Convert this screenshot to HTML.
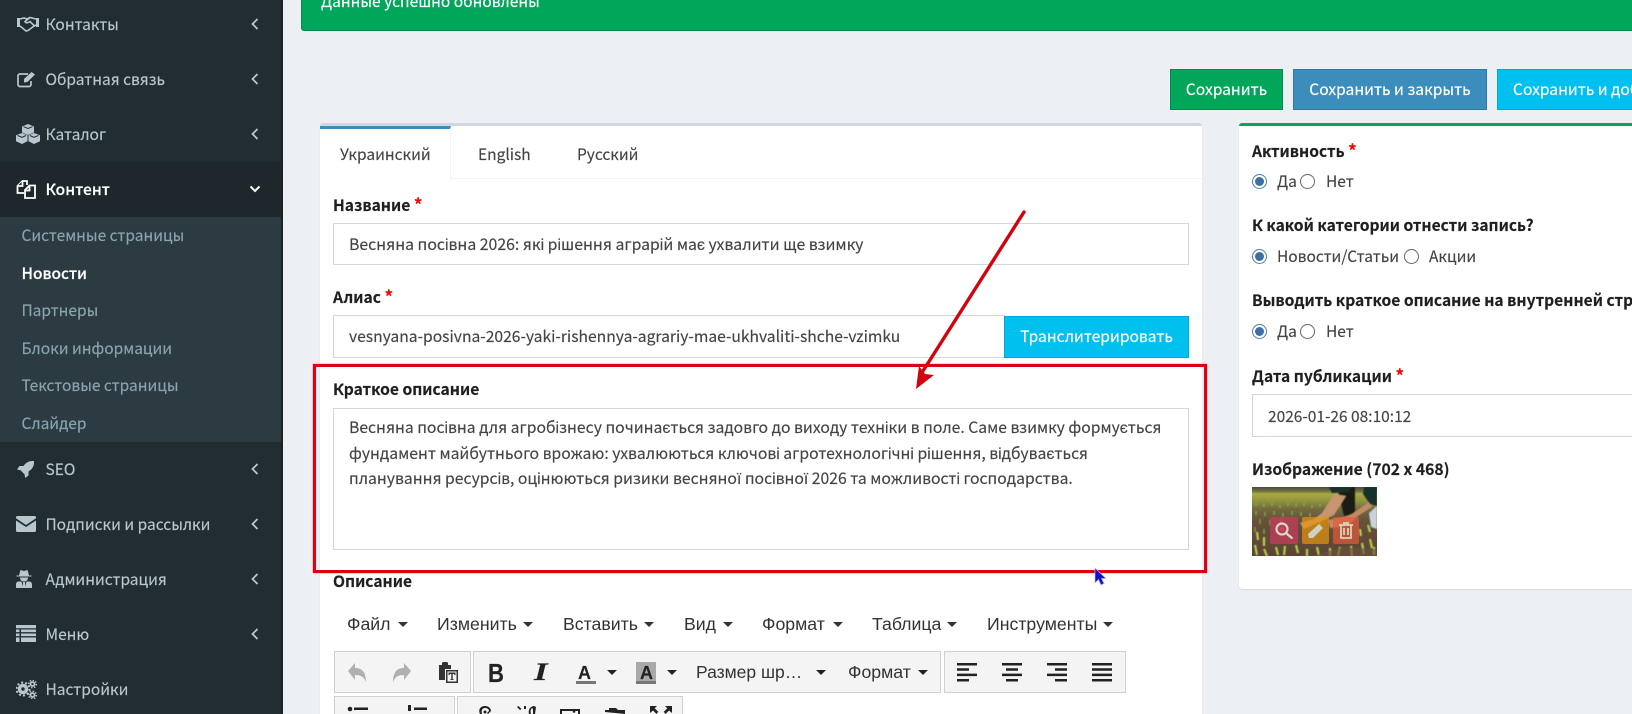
<!DOCTYPE html>
<html lang="ru"><head><meta charset="utf-8"><title>Новости</title>
<style>
html,body{margin:0;padding:0;width:1632px;height:714px;overflow:hidden;background:#ecf0f5}
body{position:relative;font-family:"Noto Sans CJK JP","Liberation Sans",sans-serif;font-size:15.5px;color:#333}
div,span,svg{position:absolute;display:block;box-sizing:border-box}
.t{white-space:nowrap;line-height:20px;height:20px;-webkit-text-stroke:.15px}
.nav{color:#b8c7ce;left:45.5px;font-size:15.5px}
.sub{color:#8aa4af;left:21.5px;font-size:15.5px}
.b{font-weight:700;color:#1f1f1f;font-size:15.6px}
.b i{font-style:normal;color:#f00;font-weight:700;font-size:17px}
.v{color:#444}
.w{font-size:15.72px}
.inp{background:#fff;border:1px solid #d2d6de}
.btn{color:#fff;text-align:center;line-height:39px;font-size:15.6px;white-space:nowrap;-webkit-text-stroke:.15px}
.m{font-family:"Liberation Sans",sans-serif;font-size:17.7px;color:#333;white-space:nowrap;line-height:20px;height:20px}
.c{width:0;height:0;border-left:5px solid transparent;border-right:5px solid transparent;border-top:5px solid #333}
.g{background:#f4f4f4;border:1px solid #d0d0d0}
.r{width:15px;height:15px;border-radius:50%;border:1px solid #666;background:#fff}
.rc{width:15px;height:15px;border-radius:50%;border:1.5px solid #4a7fb0;background:#fff}
.rc:after{content:"";position:absolute;left:1.5px;top:1.5px;width:9px;height:9px;border-radius:50%;background:#3c6fa3}
</style></head><body>

<!-- sidebar -->
<div style="left:0;top:0;width:283px;height:714px;background:#222d32;border-right:2px solid #1a2226"></div>
<div style="left:0;top:162px;width:281px;height:55px;background:#1e282c"></div>
<div style="left:0;top:217px;width:281px;height:225px;background:#2c3b41"></div>

<svg style="left:16px;top:16px" width="24" height="16" viewBox="0 0 24 16" fill="none" stroke="#b8c7ce" stroke-width="1.6"><path d="M1 2h3v9H1zM20 2h3v9h-3z" fill="#b8c7ce" stroke="none"/><path d="M4 3l4-1 3 1 3-1.500 6 1.500M4 10l6 5 2-.5 6-4.500 2-1M14 1.500L9 5.500c1 2 3 1.500 5 0l5 5"/></svg>
<span class="t nav" style="top:14px">Контакты</span>
<svg style="left:17px;top:71px" width="19" height="17" viewBox="0 0 19 17" fill="none" stroke="#b8c7ce" stroke-width="1.700"><path d="M14 10v3.500a2 2 0 0 1-2 2H3a2 2 0 0 1-2-2V5a2 2 0 0 1 2-2h8"/><path d="M7 8L14.500 1 18 3.500 10.500 11 7 11.500z" fill="#b8c7ce" stroke="none"/></svg>
<span class="t nav" style="top:69px">Обратная связь</span>
<svg style="left:16px;top:124px" width="24" height="20" viewBox="0 0 24 20" fill="#b8c7ce"><path d="M12 0l6 2.500v6L12 11 6 8.500v-6zM6 9l5.500 2.300v6L6 20 0 17.300v-6zM18 9l6 2.300v6L18 20l-5.500-2.700v-6z"/><path d="M7.500 2.700L12 4.500l4.500-1.800M1.500 11.500L6 13.300l4-1.800M13.800 11.500l4.200 1.800 4.500-1.800" stroke="#222d32" stroke-width="1" fill="none"/></svg>
<span class="t nav" style="top:124px">Каталог</span>
<svg style="left:16px;top:179px" width="20" height="20" viewBox="0 0 20 20" fill="none" stroke="#fff" stroke-width="1.800"><path d="M8 14H1.500V7L6.500 2H11v4"/><path d="M6.500 2v5h-5M19 19H9V11l4.500-4.500H19z" fill="#1e282c"/><path d="M13.500 6.500v5H9"/></svg>
<span class="t nav" style="top:179px;color:#fff;font-weight:500">Контент</span>

<span class="t sub" style="top:225px">Системные страницы</span>
<span class="t sub" style="top:263px;color:#fff;font-weight:500">Новости</span>
<span class="t sub" style="top:300px">Партнеры</span>
<span class="t sub" style="top:338px">Блоки информации</span>
<span class="t sub" style="top:375px">Текстовые страницы</span>
<span class="t sub" style="top:413px">Слайдер</span>

<svg style="left:17px;top:461px" width="17" height="17" viewBox="0 0 17 17" fill="#b8c7ce"><path d="M17 0c-5-.3-8 1.500-10.500 5H2.500L0 8.500l3.500.7 4 4 .7 3.800 3.300-2.500v-4C15.500 8 17.300 5 17 0z"/></svg>
<span class="t nav" style="top:459px">SEO</span>
<svg style="left:16px;top:516px" width="20" height="16" viewBox="0 0 20 16" fill="#b8c7ce"><path d="M1.500 0h17A1.500 1.500 0 0 1 20 1.500v.8L10 9 0 2.300v-.8A1.500 1.500 0 0 1 1.500 0zM0 4.500L10 11l10-6.500v10A1.500 1.500 0 0 1 18.500 16h-17A1.500 1.500 0 0 1 0 14.500z"/></svg>
<span class="t nav" style="top:514px">Подписки и рассылки</span>
<svg style="left:16px;top:569px" width="16" height="19" viewBox="0 0 16 19" fill="#b8c7ce"><path d="M4.500 1L8 2l3.500-1L13 6.500h2.500v1H.5v-1H3zM4 8.500h8c0 2.500-1.500 4-4 4s-4-1.500-4-4zM2.500 12.500h3L7 19H0v-3.500c0-1.500 1-3 2.500-3zM10.500 12.500h3c1.500 0 2.500 1.500 2.500 3V19H9z"/><path d="M7 13h2l.5 6h-3z"/></svg>
<span class="t nav" style="top:569px">Администрация</span>
<svg style="left:16px;top:625px" width="20" height="17" viewBox="0 0 20 17" fill="#b8c7ce"><path d="M0 0h20v3.200H0zM0 4.500h3.500v2.600H0zM5 4.500h15v2.600H5zM0 8.500h3.500v2.600H0zM5 8.500h15v2.600H5zM0 12.500h3.500V17H0zM5 12.500h15V17H5z"/></svg>
<span class="t nav" style="top:624px">Меню</span>
<svg style="left:16px;top:680px" width="21" height="19" viewBox="0 0 21 19"><g fill="none" stroke="#b8c7ce"><circle cx="7" cy="9" r="3.500" stroke-width="3.500"/><circle cx="7" cy="9" r="6.500" stroke-width="2" stroke-dasharray="2 2.080"/><circle cx="16.500" cy="4" r="2" stroke-width="1.800"/><circle cx="16.500" cy="4" r="3.800" stroke-width="1.400" stroke-dasharray="1.500 1.480"/><circle cx="16.500" cy="15" r="2" stroke-width="1.800"/><circle cx="16.500" cy="15" r="3.800" stroke-width="1.400" stroke-dasharray="1.500 1.480"/></g></svg>
<span class="t nav" style="top:679px">Настройки</span>

<svg style="left:250px;top:0" width="12" height="714" viewBox="0 0 12 714" fill="none" stroke="#b8c7ce" stroke-width="1.800"><path d="M7.500 19l-5 5 5 5M7.500 74l-5 5 5 5M7.500 129l-5 5 5 5M7.500 464l-5 5 5 5M7.500 519l-5 5 5 5M7.500 574l-5 5 5 5M7.500 629l-5 5 5 5"/><path d="M.5 186.500l4.500 4.500 4.500-4.500" stroke="#fff" stroke-width="2"/></svg>

<!-- alert -->
<div style="left:301px;top:-6px;width:1340px;height:37px;background:#00a65a;border:1px solid #008d4c;border-radius:3px"></div>
<span class="t" style="left:321px;top:-9px;color:#fff">Данные успешно обновлены</span>

<!-- action buttons -->
<div class="btn" style="left:1170px;top:69px;width:113px;height:41px;background:#00a65a;border:1px solid #008d4c">Сохранить</div>
<div class="btn" style="left:1293px;top:69px;width:194px;height:41px;background:#3c8dbc;border:1px solid #2e79a8">Сохранить и закрыть</div>
<div class="btn" style="left:1497px;top:69px;width:190px;height:41px;background:#00c0ef;border:1px solid #00acd6;text-align:left;padding-left:15px">Сохранить и добавить</div>

<!-- left card -->
<div style="left:320px;top:123px;width:882px;height:600px;background:#fff;border-top:3px solid #d2d6de;border-radius:3px;box-shadow:0 1px 1px rgba(0,0,0,.1)"></div>
<div style="left:320px;top:178px;width:882px;height:1px;background:#f4f4f4"></div>
<div style="left:320px;top:126px;width:131px;height:54px;background:#fff;border-top:3px solid #3c8dbc;border-right:1px solid #f4f4f4"></div>
<span class="t" style="left:340px;top:144px;color:#444">Украинский</span>
<span class="t" style="left:478px;top:144px;color:#444">English</span>
<span class="t" style="left:577px;top:144px;color:#444">Русский</span>

<span class="t b" style="left:333px;top:194px">Название <i>*</i></span>
<div class="inp" style="left:333px;top:223px;width:856px;height:42px"></div>
<span class="t v" style="left:349px;top:234px;font-size:15.8px">Весняна посівна 2026: які рішення аграрій має ухвалити ще взимку</span>

<span class="t b" style="left:333px;top:286px">Алиас <i>*</i></span>
<div class="inp" style="left:333px;top:315px;width:672px;height:43px"></div>
<span class="t v" style="left:349px;top:326px;font-size:15.65px">vesnyana-posivna-2026-yaki-rishennya-agrariy-mae-ukhvaliti-shche-vzimku</span>
<div class="btn" style="left:1004px;top:316px;width:185px;height:42px;background:#00c0ef;border:1px solid #00acd6">Транслитерировать</div>

<span class="t b" style="left:333px;top:379px">Краткое описание</span>
<div class="inp" style="left:333px;top:408px;width:856px;height:142px"></div>
<span class="t v w" style="left:349px;top:417px">Весняна посівна для агробізнесу починається задовго до виходу техніки в поле. Саме взимку формується</span>
<span class="t v w" style="left:349px;top:443px">фундамент майбутнього врожаю: ухвалюються ключові агротехнологічні рішення, відбувається</span>
<span class="t v w" style="left:349px;top:468px">планування ресурсів, оцінюються ризики весняної посівної 2026 та можливості господарства.</span>

<span class="t b" style="left:333px;top:571px">Описание</span>

<!-- tinymce menu -->
<span class="m" style="left:347px;top:614px">Файл</span><span class="c" style="left:398px;top:622px"></span>
<span class="m" style="left:437px;top:614px">Изменить</span><span class="c" style="left:523px;top:622px"></span>
<span class="m" style="left:563px;top:614px">Вставить</span><span class="c" style="left:644px;top:622px"></span>
<span class="m" style="left:684px;top:614px">Вид</span><span class="c" style="left:723px;top:622px"></span>
<span class="m" style="left:762px;top:614px">Формат</span><span class="c" style="left:833px;top:622px"></span>
<span class="m" style="left:872px;top:614px">Таблица</span><span class="c" style="left:947px;top:622px"></span>
<span class="m" style="left:987px;top:614px">Инструменты</span><span class="c" style="left:1103px;top:622px"></span>

<!-- toolbar -->
<div class="g" style="left:334px;top:651px;width:137px;height:42px"></div>
<div class="g" style="left:473px;top:651px;width:468px;height:42px"></div>
<div class="g" style="left:944px;top:651px;width:182px;height:42px"></div>
<div class="g" style="left:334px;top:696px;width:121px;height:30px"></div>
<div class="g" style="left:457px;top:696px;width:226px;height:30px"></div>

<svg style="left:348px;top:663px" width="18" height="19" viewBox="0 0 18 19" fill="#b0b0b0"><path d="M7 0v5c6 0 11 3 11 14-2-5-5-7-11-7v5L0 8z"/></svg>
<svg style="left:393px;top:663px" width="18" height="19" viewBox="0 0 18 19" fill="#b0b0b0"><path d="M11 0v5C5 5 0 8 0 19c2-5 5-7 11-7v5l7-9z"/></svg>
<svg style="left:438px;top:662px" width="20" height="21" viewBox="0 0 20 21" fill="#333"><path d="M1 3h3V1.500A1.500 1.500 0 0 1 5.500 0h3A1.500 1.500 0 0 1 10 1.500V3h3v4H7v11H1z"/><rect x="8" y="8" width="12" height="13" fill="#333"/><rect x="9.500" y="9.500" width="9" height="10" fill="#f4f4f4"/><path d="M10.500 10.500h7v2.500h-1l-.5-1h-1.300v5l1 .5v.5h-3.400v-.5l1-.5v-5H12l-.5 1h-1z"/></svg>

<span class="t" style="left:488px;top:662px;height:22px;font:700 26px/22px 'Liberation Sans',sans-serif;color:#222;transform-origin:0 50%;transform:scaleX(.85)">B</span>
<span class="t" style="left:534px;top:662px;height:22px;font:italic 700 25px/22px 'Liberation Serif',serif;color:#222;transform-origin:0 50%;transform:scaleX(1.4)">I</span>
<span class="t" style="left:578px;top:663px;font:700 18px/20px 'Liberation Sans',sans-serif;color:#222">A</span>
<div style="left:576px;top:681px;width:20px;height:3px;background:#777"></div>
<span class="c" style="left:607px;top:670px;border-top-color:#222"></span>
<div style="left:636px;top:662px;width:20px;height:22px;background:#a9a9a9"></div>
<span class="t" style="left:640px;top:663px;font:700 18px/20px 'Liberation Sans',sans-serif;color:#222">A</span>
<div style="left:636px;top:681px;width:20px;height:3px;background:#777"></div>
<span class="c" style="left:667px;top:670px;border-top-color:#222"></span>

<span class="m" style="left:696px;top:662px;font-size:17.5px">Размер шр…</span><span class="c" style="left:816px;top:670px;border-top-color:#222"></span>
<span class="m" style="left:848px;top:662px">Формат</span><span class="c" style="left:918px;top:670px;border-top-color:#222"></span>

<svg style="left:957px;top:663px" width="160" height="19" viewBox="0 0 160 19" fill="#222"><path d="M0 0h20v2.500H0zM0 5.300h12v2.500H0zM0 10.600h20v2.500H0zM0 16h12v2.500H0z"/><path d="M45 0h20v2.500H45zM49 5.300h12v2.500H49zM45 10.600h20v2.500H45zM49 16h12v2.500H49z"/><path d="M90 0h20v2.500H90zM98 5.300h12v2.500H98zM90 10.600h20v2.500H90zM98 16h12v2.500H98z"/><path d="M135 0h20v2.500h-20zM135 5.300h20v2.500h-20zM135 10.600h20v2.500h-20zM135 16h20v2.500h-20z"/></svg>

<svg style="left:340px;top:704px" width="340" height="10" viewBox="340 704 340 10" fill="#222">
<circle cx="350" cy="709" r="2.300"/><path d="M354 707.500h14v2.500h-14z"/>
<path d="M408 705h3v6h-3zM414 707.500h13v2.500h-13z"/>
<path d="M480 714c-2-4 0-8 5-8 3 0 6 2 6 5l-3 3-1-1 2-2c0-2-2-3-4-3-3 0-4 3-3 6z"/><circle cx="485" cy="712" r="1.500"/>
<path d="M517 707l1.500-1 3 3-1.500 1zM524 706h2v3h-2z"/><path d="M529 714a6 6 0 0 1 5-8l2 1-1 7h-2v-5l-1-1c-1 1-2 3-1 6z"/>
<path d="M560 709h20v5h-2v-3h-16v3h-2z"/><circle cx="574" cy="711.500" r="1.300"/>
<path d="M605 712v-2h4v-2h7l2 2h7v4z"/>
<path d="M650 706h7l-2.300 2.300 3.500 3.500-1.700 2.200-3.500-3.500-3 2.500zM672 706h-7l2.300 2.300-3.500 3.500 1.700 2.200 3.500-3.500 3 2.500z"/>
</svg>

<!-- right card -->
<div style="left:1239px;top:123px;width:400px;height:466px;background:#fff;border-top:3px solid #00a65a;border-radius:3px;box-shadow:0 1px 1px rgba(0,0,0,.1)"></div>
<span class="t b" style="left:1252px;top:140px">Активность <i>*</i></span>
<span class="rc" style="left:1252px;top:174px"></span><span class="t v" style="left:1277px;top:171px">Да</span>
<span class="r" style="left:1300px;top:174px"></span><span class="t v" style="left:1326px;top:171px">Нет</span>
<span class="t b" style="left:1252px;top:215px">К какой категории отнести запись?</span>
<span class="rc" style="left:1252px;top:249px"></span><span class="t v" style="left:1277px;top:246px">Новости/Статьи</span>
<span class="r" style="left:1404px;top:249px"></span><span class="t v" style="left:1429px;top:246px">Акции</span>
<span class="t b" style="left:1252px;top:290px">Выводить краткое описание на внутренней странице</span>
<span class="rc" style="left:1252px;top:324px"></span><span class="t v" style="left:1277px;top:321px">Да</span>
<span class="r" style="left:1300px;top:324px"></span><span class="t v" style="left:1326px;top:321px">Нет</span>
<span class="t b" style="left:1252px;top:365px">Дата публикации <i>*</i></span>
<div class="inp" style="left:1252px;top:394px;width:400px;height:43px"></div>
<span class="t v" style="left:1268px;top:406px">2026-01-26 08:10:12</span>
<span class="t b" style="left:1252px;top:459px;font-size:15.7px">Изображение (702 x 468)</span>

<svg style="left:1252px;top:487px" width="125" height="69" viewBox="0 0 125 69">
<defs><linearGradient id="f" x1="0" y1="0" x2="0" y2="1"><stop offset="0" stop-color="#4e4b3c"/><stop offset=".06" stop-color="#6e6e48"/><stop offset=".1" stop-color="#a9ab3e"/><stop offset=".2" stop-color="#8f9440"/><stop offset=".32" stop-color="#6f6a3f"/><stop offset=".5" stop-color="#66503a"/><stop offset="1" stop-color="#5c4433"/></linearGradient>
<filter id="bl"><feGaussianBlur stdDeviation=".5"/></filter></defs>
<rect width="125" height="69" fill="url(#f)"/>
<g filter="url(#bl)">
<g stroke="#93b540" stroke-width="1.500" opacity=".75" fill="none">
<path d="M4 16v3M12 17v3M20 16v3M28 18v3M36 16v3M44 17v3M52 16v3M60 18v3M68 17v3M4 24v4M13 25v4M22 24v4M31 26v4M40 24v4M49 25v4M58 26v4M8 32v5M18 33v5M29 32v5M3 40v5M12 42v5M68 36v5"/></g>
<g stroke="#b4cf4c" stroke-width="2.200" fill="none">
<path d="M5 45l1 8M12 50v9M3 58l2 10M12 62l3 7M24 60l2 8M33 59l-1 9M44 58l2 8M55 62v7M65 60l2 9M78 61v8M88 60l-2 9M99 59l1 10M110 56l2 11M118 52l2 9M122 60v8M108 42l1 7M116 38l2 7"/></g>
<path d="M85 0h18v29H92z" fill="#1d1a17"/>
<path d="M77 0H100l-4 5-16 1z" fill="#16332b"/>
<path d="M82 7L70 26l-8 6-14 4 4 6 18-8 12-6L94 9z" fill="#c99470"/>
<path d="M118 14L100 27l-8 3-16 3 2 8 18-2 10-10 14-9z" fill="#c08a63"/>
<path d="M112 0h13v19l-7-2-7-10z" fill="#16332b"/>
<path d="M117 26l8-7v23l-6-2z" fill="#c8d3de"/>
<path d="M90 60l35 2v7H60z" fill="#6b5240" opacity=".7"/>
</g>
<rect x="18" y="30" width="28" height="27" rx="2" fill="#c83c5e" opacity=".72"/>
<rect x="50" y="30" width="27" height="27" rx="2" fill="#e8960f" opacity=".68"/>
<rect x="81" y="30" width="26" height="27" rx="2" fill="#e85a3c" opacity=".68"/>
<g fill="none" stroke="#e0d6c8" stroke-width="2.200"><circle cx="30" cy="42" r="5.500"/><path d="M34.500 46.500l6 5"/><path d="M27.500 42h5M30 39.500v5" stroke="#d8405f"/></g>
<path d="M57 51l-1-4 11-10 4 4-10 10z" fill="#cfd2c0"/>
<g fill="none" stroke="#d8d4bc" stroke-width="1.800"><path d="M87 38h14M92 38v-2h4v2M89 38v13h10V38M92 41v7M96 41v7"/></g>
</svg>

<!-- annotation -->
<div style="left:313px;top:364px;width:894px;height:209px;border:3px solid #da0410;box-shadow:0 0 1.500px rgba(218,4,16,.6)"></div>
<svg style="left:900px;top:205px" width="140" height="190" viewBox="900 205 140 190" fill="#d4020c"><path d="M1024 212L923 371" stroke="#d4020c" stroke-width="3.400" fill="none" stroke-linecap="round"/><path d="M916 389l3-23 6 8 9 1z"/></svg>
<svg style="left:1094px;top:568px" width="13" height="18" viewBox="0 0 13 18"><path d="M1 0v15l3.500-3.500 2.500 5.500 3-1.500-2.500-5H12z" fill="#1010c8" stroke="#b8b8d8" stroke-width=".7"/></svg>
</body></html>
